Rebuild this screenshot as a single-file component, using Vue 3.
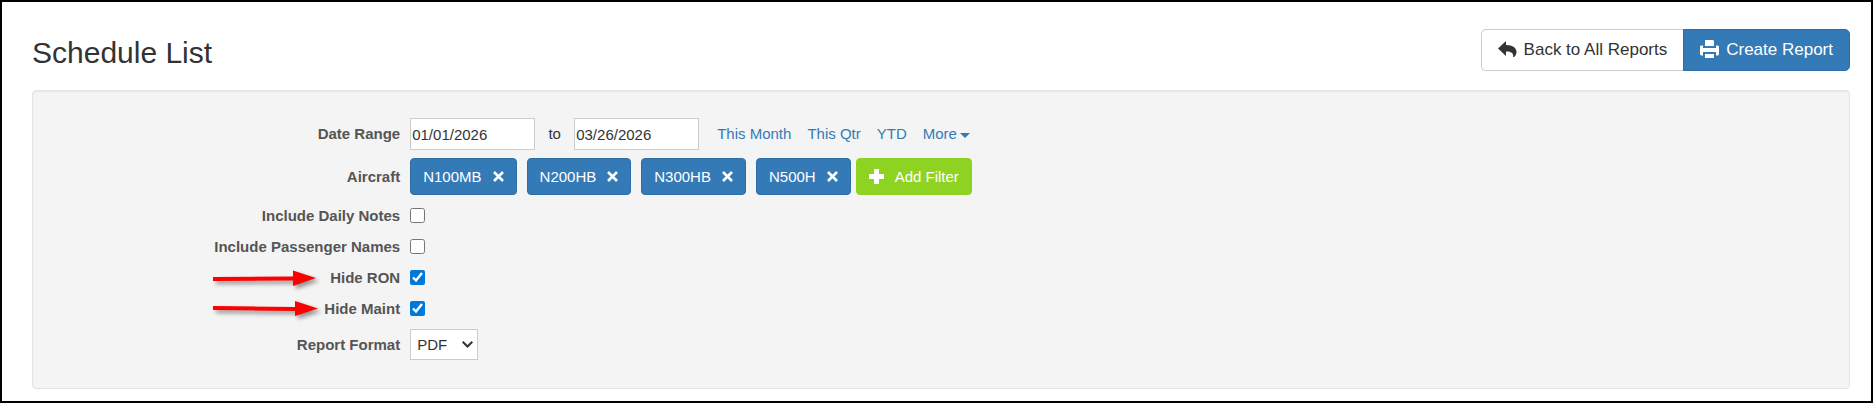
<script setup>
import { ref } from 'vue'

const from = ref('01/01/2026')
const to = ref('03/26/2026')
const aircraft = ref(['N100MB', 'N200HB', 'N300HB', 'N500H'])
const format = ref('PDF')
const options = ref([
  { id: 'notes', label: 'Include Daily Notes', checked: false },
  { id: 'names', label: 'Include Passenger Names', checked: false },
  { id: 'ron', label: 'Hide RON', checked: true, arrow: 'M5 15 L85 14.5 V8.5 L108 16 L85 24 V18.5 L5 19 Z' },
  { id: 'maint', label: 'Hide Maint', checked: true, arrow: 'M5 13 L87 14 V8 L110 15.5 L87 23 V18 L5 17 Z' }
])

function removeTag(tag) {
  aircraft.value = aircraft.value.filter((t) => t !== tag)
}
</script>

<template>
  <main class="page">
    <header class="head">
      <h1>Schedule List</h1>
      <div class="actions">
        <button type="button" class="btn back">
          <svg width="19" height="19" viewBox="0 0 19 19" aria-hidden="true">
            <path fill="currentColor" d="M0 8.500 L8 1 V5 C15 5 18.500 8 18.500 12 C18.500 14 17.500 16 16 17 H15 C16 13.500 13.500 11.500 8 11.500 V16 Z" />
          </svg>
          Back to All Reports
        </button>
        <button type="button" class="btn create">
          <svg width="19" height="19" viewBox="0 0 19 19" aria-hidden="true">
            <path fill="currentColor" d="M5 0 H13 L14 1 V6 H5 Z M1 5.500 H3 V8 H16 V5.500 H18 L19 6.500 V14.500 L18 15.500 H16 V12 H3 V15.500 H1 L0 14.500 V6.500 Z M5 14 H14 V18 H5 Z" />
          </svg>
          Create Report
        </button>
      </div>
    </header>

    <form class="panel" @submit.prevent>
      <div class="row">
        <label class="name" for="from">Date Range</label>
        <div class="field">
          <input id="from" v-model="from" class="date" type="text" />
          <label class="to" for="to">to</label>
          <input id="to" v-model="to" class="date" type="text" />
          <nav class="links">
            <a href="#">This Month</a>
            <a href="#">This Qtr</a>
            <a href="#">YTD</a>
            <a href="#">More<span class="caret"></span></a>
          </nav>
        </div>
      </div>

      <div class="row aircraft">
        <span class="name">Aircraft</span>
        <div class="field">
          <div class="tags">
            <button v-for="tag in aircraft" :key="tag" type="button" class="tag" @click="removeTag(tag)">
              {{ tag }}
              <svg width="11" height="11" viewBox="0 0 11 11" aria-hidden="true">
                <path fill="none" stroke="currentColor" stroke-width="2.6" d="M1 1 L10 10 M10 1 L1 10" />
              </svg>
            </button>
          </div>
          <button type="button" class="tag add">
            <svg width="15" height="15" viewBox="0 0 15 15" aria-hidden="true">
              <path fill="currentColor" d="M5 0 H10 V5 H15 V10 H10 V15 H5 V10 H0 V5 H5 Z" />
            </svg>
            Add Filter
          </button>
        </div>
      </div>

      <div v-for="o in options" :key="o.id" class="row option">
        <label class="name" :for="o.id">{{ o.label }}</label>
        <div class="field"><input :id="o.id" v-model="o.checked" type="checkbox" /></div>
        <svg v-if="o.arrow" class="arrow" width="118" height="32" viewBox="0 0 118 32" aria-hidden="true">
          <path fill="#f00" :d="o.arrow" />
        </svg>
      </div>

      <div class="row format">
        <label class="name" for="format">Report Format</label>
        <div class="field">
          <div class="picker">
            <select id="format" v-model="format">
              <option>PDF</option>
              <option>CSV</option>
            </select>
            <svg class="chevron" width="11" height="7" viewBox="0 0 11 7" aria-hidden="true">
              <path fill="none" stroke="currentColor" stroke-width="2" d="M.7 .8 L5.500 5.500 L10.300 .8" />
            </svg>
          </div>
        </div>
      </div>
    </form>
  </main>
</template>

<style>
body {
  margin: 0;
  background: #fff;
}
</style>

<style scoped>
.page {
  box-sizing: border-box;
  min-height: 100vh;
  padding: 27px 21px 12px 30px;
  border: 2px solid #000;
  font-family: "Liberation Sans", Arial, sans-serif;
  font-size: 15px;
  line-height: 20px;
  color: #333;
}
button,
input,
select {
  font: inherit;
  color: inherit;
}
.head {
  display: flex;
  justify-content: space-between;
  margin-bottom: 19px;
}
h1 {
  margin: 7px 0 0;
  font-size: 30px;
  font-weight: 400;
  line-height: 34px;
}
.actions {
  display: flex;
}
.btn {
  display: flex;
  align-items: center;
  gap: 7px;
  height: 42px;
  padding: 0 16px;
  border: 1px solid #ccc;
  background: #fff;
  font-size: 17px;
  cursor: pointer;
}
.btn svg {
  margin-bottom: 2px;
}
.back {
  border-right: 0;
  border-radius: 5px 0 0 5px;
}
.create {
  border-color: #2e6da4;
  border-radius: 0 5px 5px 0;
  background: #337ab7;
  color: #fff;
}
.panel {
  padding: 27px 10px 28px;
  border: 1px solid #e3e3e3;
  border-radius: 4px;
  background: #f4f4f4;
  box-shadow: inset 0 1px 1px rgba(0, 0, 0, 0.05);
}
.row {
  position: relative;
  display: grid;
  grid-template-columns: minmax(0, 1fr) minmax(0, 4fr);
  column-gap: 10px;
  align-items: center;
}
.name {
  text-align: right;
  font-weight: 700;
  color: #555;
}
.field {
  display: flex;
  align-items: center;
}
.date {
  box-sizing: border-box;
  width: 125px;
  height: 32px;
  padding: 0 1px;
  border: 1px solid #ccc;
  background: #fff;
}
.to {
  width: 39px;
  text-align: center;
}
.links {
  display: flex;
  gap: 16px;
  margin-left: 18px;
}
.links a {
  color: #337ab7;
  text-decoration: none;
}
.caret {
  display: inline-block;
  margin-left: 3px;
  border: 5px solid transparent;
  border-top-color: currentColor;
  border-bottom: 0;
  vertical-align: middle;
}
.aircraft {
  margin: 8px 0 5px;
}
.tags {
  display: flex;
  gap: 10px;
  margin-right: 5px;
}
.tag {
  display: flex;
  align-items: center;
  gap: 11px;
  height: 37px;
  padding: 0 12px;
  border: 1px solid #2e6da4;
  border-radius: 4px;
  background: #337ab7;
  color: #fff;
  cursor: pointer;
}
.add {
  border-color: #8ed321;
  background: #8ed321;
}
.option {
  min-height: 31px;
}
input[type='checkbox'] {
  width: 15px;
  height: 15px;
  margin: 0;
  accent-color: #0078d7;
}
.arrow {
  position: absolute;
  top: 0;
  right: calc(80% + 76px);
  filter: drop-shadow(3px 3px 2px rgba(0, 0, 0, 0.4));
}
.format {
  margin-top: 5px;
}
.picker {
  position: relative;
}
select {
  display: block;
  box-sizing: border-box;
  width: 68px;
  height: 31px;
  padding: 0 6px;
  border: 1px solid #ccc;
  border-radius: 0;
  background: #fff;
  appearance: none;
}
.chevron {
  position: absolute;
  top: 12px;
  right: 5px;
  pointer-events: none;
}
</style>
